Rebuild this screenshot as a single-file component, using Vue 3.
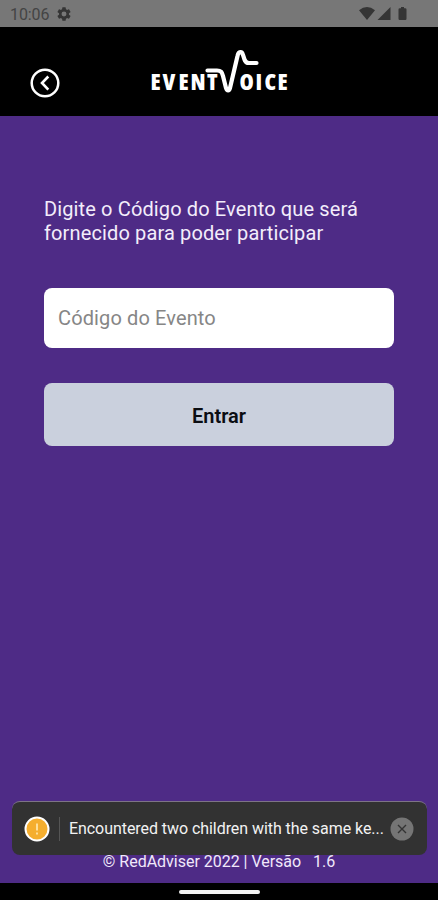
<script setup>
import { ref } from 'vue'

const hora = ref('10:06')
const codigo = ref('')
const versao = '1.6'
const aviso = ref('Encountered two children with the same ke...')
const mostrarAviso = ref(true)
</script>

<template>
  <div class="pantalla">
    <div class="status-bar">
      <span class="hora">{{ hora }}</span>
      <svg class="engrenagem" width="16" height="16" viewBox="0 0 24 24">
        <path fill="#353535" fill-rule="evenodd" d="M19.400 13a7.500 7.500 0 0 0 0-2l2.200-1.700c.2-.1.300-.4.100-.6l-2-3.500c-.1-.2-.4-.3-.6-.2l-2.500 1a7.300 7.300 0 0 0-1.700-1l-.4-2.600a.5.5 0 0 0-.5-.4h-4a.5.5 0 0 0-.5.4L9.100 5a7.300 7.300 0 0 0-1.700 1L4.900 5c-.2-.1-.5 0-.6.2l-2 3.500c-.1.200-.1.500.1.600L4.600 11a7.500 7.500 0 0 0 0 2l-2.200 1.700c-.2.100-.2.400-.1.600l2 3.500c.1.200.4.300.6.200l2.500-1c.5.400 1.100.8 1.700 1l.4 2.600c0 .2.200.4.500.4h4c.3 0 .5-.2.500-.4l.4-2.600c.6-.2 1.200-.6 1.700-1l2.500 1c.2.100.5 0 .6-.2l2-3.500c.1-.2.1-.5-.1-.6zM12 15.700a3.700 3.700 0 1 1 0-7.400 3.700 3.700 0 0 1 0 7.400z" />
      </svg>
      <svg class="sinais" width="49" height="16" viewBox="0 0 49 16">
        <g fill="#353535">
          <path d="M0 4.200Q8 -2 16 4.200L8 14z" />
          <path d="M31.500 1V14H18.500z" />
          <path d="M42 1h3v1.300h1.200q1.300 0 1.300 1.300v9.200q0 1.200-1.200 1.200h-5.600q-1.200 0-1.200-1.200V3.600q0-1.300 1.300-1.300h1.200z" />
        </g>
      </svg>
    </div>

    <header class="cabecalho">
      <button class="btn-voltar" aria-label="Voltar">
        <svg width="30" height="30" viewBox="0 0 30 30" fill="none" stroke="#fff">
          <circle cx="15" cy="15" r="13.300" stroke-width="2.500" />
          <path d="M18.300 8.500L12 15l6.300 6.700" stroke-width="2.600" />
        </svg>
      </button>
      <svg class="logo" width="140" height="48" viewBox="0 0 140 48">
        <g class="logo-texto" fill="#fff">
          <text x="0.500 12.500 28.500 40.500 57" y="42">EVENT</text>
          <text x="89.500 105.500 114.500 127.500" y="42">OICE</text>
        </g>
        <path d="M57.500 22.500H67C71 22.500 72 24 73 28L76 40C77 43.300 79.200 43.300 80 40L87.500 8C88.500 3 92 3 93 7L94.500 11.500C95.300 14 96.500 15 99 15H106.500" fill="none" stroke="#fff" stroke-width="4.200" stroke-linecap="round" />
      </svg>
    </header>

    <main class="conteudo">
      <p class="instrucao">Digite o Código do Evento que será<br>fornecido para poder participar</p>
      <input v-model="codigo" class="campo" type="text" placeholder="Código do Evento">
      <button class="btn-entrar">Entrar</button>
      <p class="rodape">© RedAdviser 2022 | Versão &nbsp; {{ versao }}</p>

      <div v-if="mostrarAviso" class="aviso">
        <svg class="alerta" width="26" height="26" viewBox="0 0 26 26">
          <circle cx="13" cy="13" r="11.500" fill="#f5ae2e" stroke="#fff" stroke-width="2" />
          <path d="M13 7.500v7M13 16.500v2" stroke="#ffe5a6" stroke-width="1.800" />
        </svg>
        <span class="aviso-texto">{{ aviso }}</span>
        <button class="btn-fechar" aria-label="Fechar" @click="mostrarAviso = false">
          <svg width="24" height="24" viewBox="0 0 24 24">
            <circle cx="12" cy="12" r="11.500" fill="#757575" />
            <path d="M8 8l8 8M16 8l-8 8" stroke="#333" stroke-width="1.400" />
          </svg>
        </button>
      </div>
    </main>

    <div class="nav-bar">
      <span class="nav-pill"></span>
    </div>
  </div>
</template>

<style>
body {
  margin: 0;
}
</style>

<style scoped>
.pantalla {
  display: flex;
  flex-direction: column;
  width: 438px;
  height: 900px;
  overflow: hidden;
  background: #4e2b86;
  font-family: Roboto, sans-serif;
}

button {
  border: none;
  padding: 0;
  background: none;
  font-family: inherit;
  cursor: pointer;
}

.status-bar {
  display: flex;
  align-items: center;
  box-sizing: border-box;
  height: 27px;
  padding: 1px 30px 0 10px;
  background: #777;
}

.hora {
  width: 46px;
  font-size: 16px;
  letter-spacing: -0.1px;
  color: #444;
}

.sinais {
  margin-left: auto;
}

.cabecalho {
  display: flex;
  align-items: flex-start;
  box-sizing: border-box;
  height: 89px;
  padding: 21px 30px 0;
  background: #000;
}

.btn-voltar {
  width: 30px;
  height: 30px;
  margin-top: 20px;
}

.logo {
  margin-left: 90px;
}

.logo-texto {
  font-family: "Open Sans", sans-serif;
  font-size: 23px;
  font-weight: 800;
  font-stretch: 75%;
}

.conteudo {
  position: relative;
  display: flex;
  flex: 1;
  flex-direction: column;
  padding: 82px 44px 0;
}

.instrucao {
  margin: 0;
  font-size: 20px;
  line-height: 23.5px;
  letter-spacing: 0.13px;
  color: #f3edfb;
}

.campo {
  box-sizing: border-box;
  height: 60px;
  margin-top: 42.5px;
  padding: 1px 14px 0;
  border: none;
  border-radius: 8px;
  background: #fff;
  font-family: inherit;
  font-size: 20px;
  letter-spacing: 0.12px;
}

.campo::placeholder {
  color: #868686;
}

.btn-entrar {
  box-sizing: border-box;
  height: 63px;
  margin-top: 35.5px;
  padding-top: 2px;
  border-radius: 8px;
  background: #cad0dd;
  color: #0b0d12;
  font-size: 20px;
  font-weight: 600;
}

.rodape {
  margin: auto 0 12px;
  font-size: 16px;
  line-height: 19px;
  text-align: center;
  letter-spacing: -0.02px;
  color: #f0e8fa;
}

.aviso {
  position: absolute;
  right: 11px;
  bottom: 28px;
  left: 12px;
  display: flex;
  align-items: center;
  box-sizing: border-box;
  height: 54px;
  padding: 0 13px 0 12px;
  border-top: 1px solid #7d7486;
  border-radius: 8px;
  background: #323232;
}

.aviso-texto {
  flex: 1;
  min-width: 0;
  margin: 0 4px 0 9px;
  padding-left: 9px;
  border-left: 1px solid #555;
  font-size: 16px;
  line-height: 24px;
  letter-spacing: -0.06px;
  white-space: nowrap;
  color: #f2f2f2;
}

.btn-fechar {
  width: 24px;
  height: 24px;
}

.nav-bar {
  display: flex;
  justify-content: center;
  height: 17px;
  background: #000;
}

.nav-pill {
  width: 81px;
  height: 4px;
  margin-top: 7px;
  border-radius: 2px;
  background: #f2f2f2;
}
</style>
